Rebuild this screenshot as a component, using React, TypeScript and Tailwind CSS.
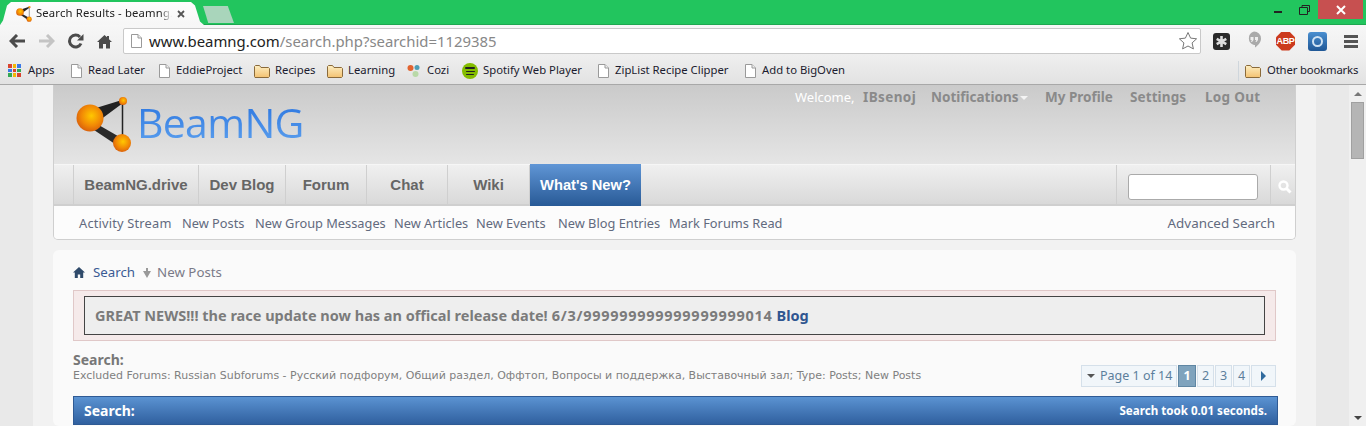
import React from "react";

const Page = ({ c = "" }: { c?: string }) => (
  <svg width="13" height="16" viewBox="0 0 13 16" className={c}>
    <path d="M1.500 1.500h6.500l3.500 3.500v9.500h-10z" fill="#fff" stroke="#9a9a9a" />
    <path d="M8 1.500v3.500h3.500" fill="#eee" stroke="#9a9a9a" />
  </svg>
);

const Folder = () => (
  <svg width="16" height="14" viewBox="0 0 16 14">
    <defs>
      <linearGradient id="fold" x1="0" y1="0" x2="0" y2="1">
        <stop offset="0" stopColor="#fdeec2" />
        <stop offset="1" stopColor="#f3c272" />
      </linearGradient>
    </defs>
    <path d="M.5 12.500v-10l1-1h4l1.500 2h7.500l1 1v8l-1 1h-13.500z" fill="url(#fold)" stroke="#8a6a3a" />
  </svg>
);

const Mark = ({ big = false }: { big?: boolean }) => {
  const id = big ? "b" : "s";
  return (
    <svg width={big ? 56 : 16} height={big ? 56 : 16} viewBox="0 0 56 56">
      <defs>
        <radialGradient id={`orb${id}`} cx="0.55" cy="0.42" r="0.6">
          <stop offset="0" stopColor="#ffc800" />
          <stop offset="0.6" stopColor="#f28a05" />
          <stop offset="1" stopColor="#d9600c" />
        </radialGradient>
      </defs>
      <path d="M20 11 46 3 47 6 24 23z" fill="#222" />
      <path d="M21 27 47 42 42 49 15 31z" fill="#2a2a2a" />
      <path d="M46.500 6v36" stroke="#222" strokeWidth="1.500" />
      <circle cx="14" cy="21" r="13.500" fill={`url(#orb${id})`} />
      <circle cx="47" cy="4" r="4" fill={`url(#orb${id})`} />
      <circle cx="46" cy="46" r="9" fill={`url(#orb${id})`} />
    </svg>
  );
};

const Chrome = () => (
  <>
    <div className="h-[25px] bg-[#22c55e] border-b border-[#1ea750] flex items-end relative shrink-0">
      <div className="relative w-[204px] h-[23px] -mb-px bg-gradient-to-b from-[#fdfdfd] to-[#f6f6f6] flex items-center pl-[16px] [clip-path:polygon(0_100%,3px_80%,7px_15%,11px_0,191px_0,195px_15%,200px_85%,100%_100%)]">
        <Mark />
        <span className="ml-[4px] w-[140px] whitespace-nowrap text-[11.3px] tracking-[0.15px] text-[#222] font-['Noto_Sans',sans-serif] [mask-image:linear-gradient(90deg,#000_124px,transparent_136px)]">
          Search Results - beamng.c
        </span>
        <svg width="8" height="8" viewBox="0 0 8 8" className="ml-[1px]">
          <path d="M1 1l6 6M7 1l-6 6" stroke="#555" strokeWidth="1.800" />
        </svg>
      </div>
      <div className="mb-[1px] -ml-px w-[31px] h-[17px] bg-[#a9d5bb] [clip-path:polygon(0_0,80%_0,100%_100%,17%_100%)]" />
      <div className="ml-auto flex items-start self-start h-[19px]">
        <div className="w-[24px] h-[19px] flex items-center justify-center">
          <div className="w-[8px] h-[2px] bg-[#222] mt-[5px]" />
        </div>
        <div className="w-[28px] h-[19px] flex items-center justify-center">
          <svg width="11" height="10" viewBox="0 0 11 10">
            <path d="M3 2.500V.5h7.500v6H8.500M.5 2.500h8v7h-8z" fill="none" stroke="#222" />
          </svg>
        </div>
        <div className="w-[45px] h-[19px] bg-[#c75050] flex items-center justify-center mr-[3px]">
          <svg width="10" height="10" viewBox="0 0 10 10">
            <path d="M1 1l8 8M9 1l-8 8" stroke="#fff" strokeWidth="2" />
          </svg>
        </div>
      </div>
    </div>
    <div className="h-[32px] bg-gradient-to-b from-[#f7f7f7] to-[#eeeeee] flex items-center shrink-0">
      <svg width="18" height="14" viewBox="0 0 18 14" className="ml-[9px]">
        <path d="M8 1 2 7l6 6M2 7h14" fill="none" stroke="#4b4b4b" strokeWidth="3" />
      </svg>
      <svg width="18" height="14" viewBox="0 0 18 14" className="ml-[10px]">
        <path d="M10 1l6 6-6 6M16 7H2" fill="none" stroke="#c4c4c4" strokeWidth="3" />
      </svg>
      <svg width="16" height="16" viewBox="0 0 16 16" className="ml-[13px]">
        <path d="M13 10.500A6 6 0 1 1 12 4" fill="none" stroke="#4b4b4b" strokeWidth="3" />
        <path d="M15.500 1v6.500H9z" fill="#4b4b4b" />
      </svg>
      <svg width="15" height="15" viewBox="0 0 15 15" className="ml-[13px]">
        <path d="M7.500 1 0 8h2v6.500h4V10h3v4.500h4V8h2l-3-2.800V2h-2v1.300z" fill="#4b4b4b" />
      </svg>
      <div className="ml-[11px] w-[1078px] h-[26px] bg-white border border-[#c9c9c9] rounded-[2px] flex items-center pl-[6px] pr-[2px]">
        <Page />
        <span className="ml-[6px] mt-[1px] text-[14.9px] text-[#222] font-['Noto_Sans',sans-serif] whitespace-nowrap">
          www.beamng.com<span className="text-[#888]">/search.php?searchid=1129385</span>
        </span>
        <svg width="20" height="20" viewBox="0 0 20 20" className="ml-auto">
          <path d="M10 1.500l2.600 5.600 6 .7-4.500 4.100 1.300 6L10 15l-5.400 2.900 1.300-6L1.400 7.800l6-.7z" fill="#fff" stroke="#777" />
        </svg>
      </div>
      <div className="ml-[12px] w-[17px] h-[17px] rounded-[3px] bg-[#2a2a2a] flex items-center justify-center">
        <svg width="11" height="11" viewBox="0 0 11 11">
          <path d="M5.500 0v11M.7 2.800l9.600 5.400M.7 8.200l9.600-5.400" stroke="#ddd" strokeWidth="2.600" />
        </svg>
      </div>
      <svg width="16" height="20" viewBox="0 0 16 20" className="ml-[16px]">
        <path d="M8 .5a7 7 0 0 1 7 7c0 4-3 7-6 9v-2.500a7 7 0 0 1-1 0 7 7 0 0 1 0-13.500z" fill="#aaa" />
        <path d="M4.500 6h3v3l-1.500 2h-1l.8-2H4.500zM9 6h3v3l-1.500 2h-1l.8-2H9z" fill="#eee" />
      </svg>
      <div className="ml-[14px] w-[19px] h-[19px] bg-[#cc3a1d] [clip-path:polygon(30%_0,70%_0,100%_30%,100%_70%,70%_100%,30%_100%,0_70%,0_30%)] flex items-center justify-center text-white text-[9px] tracking-[-0.4px] font-bold font-['Liberation_Sans',sans-serif] leading-none">
        ABP
      </div>
      <div className="ml-[13px] w-[19px] h-[19px] rounded-[3px] bg-gradient-to-b from-[#4a8fd0] to-[#1f5796] flex items-center justify-center">
        <div className="w-[11px] h-[11px] rounded-full border-2 border-[#cfe2f3]" />
      </div>
      <div className="ml-[17px] w-[14px] flex flex-col gap-[2px]">
        <div className="h-[3px] bg-[#555]" />
        <div className="h-[3px] bg-[#555]" />
        <div className="h-[3px] bg-[#555]" />
      </div>
    </div>
    <div className="h-[28px] bg-gradient-to-b from-[#eeeeee] to-[#e2e2e2] border-b border-[#a8a8a8] flex items-center pl-[8px] text-[11.3px] text-[#1b1b2e] font-['Noto_Sans',sans-serif] whitespace-nowrap shrink-0">
      <div className="grid grid-cols-3 gap-[1px] w-[13px] h-[13px]">
        {["#d9442f", "#f2b705", "#3b78e7", "#3b78e7", "#d9442f", "#34a853", "#34a853", "#f2b705", "#d9442f"].map((c, i) => (
          <div key={i} style={{ backgroundColor: c }} />
        ))}
      </div>
      <span className="ml-[7px] w-[27px]">Apps</span>
      <Page c="ml-[15px]" />
      <span className="ml-[5px] w-[55px]">Read Later</span>
      <Page c="ml-[15px]" />
      <span className="ml-[5px] w-[66px]">EddieProject</span>
      <div className="ml-[12px] flex"><Folder /></div>
      <span className="ml-[5px] w-[40px]">Recipes</span>
      <div className="ml-[12px] flex"><Folder /></div>
      <span className="ml-[5px] w-[46px]">Learning</span>
      <svg width="14" height="14" viewBox="0 0 14 14" className="ml-[13px]">
        <circle cx="3.500" cy="4" r="3" fill="#e2632f" />
        <circle cx="10" cy="3.500" r="2.500" fill="#4d9db5" />
        <circle cx="8.500" cy="10" r="3" fill="#b9d9a8" />
      </svg>
      <span className="ml-[6px] w-[23px]">Cozi</span>
      <div className="ml-[12px] w-[16px] h-[16px] rounded-full bg-[#84bd00] flex flex-col items-center justify-center gap-[2px]">
        <div className="w-[10px] h-[2px] bg-[#222] rounded-full" />
        <div className="w-[9px] h-[1px] bg-[#222] rounded-full" />
        <div className="w-[8px] h-[1px] bg-[#222] rounded-full" />
      </div>
      <span className="ml-[5px] w-[99px]">Spotify Web Player</span>
      <Page c="ml-[15px]" />
      <span className="ml-[5px] w-[114px]">ZipList Recipe Clipper</span>
      <Page c="ml-[15px]" />
      <span className="ml-[5px]">Add to BigOven</span>
      <div className="ml-auto w-px h-[20px] bg-[#cfd6dc]" />
      <div className="ml-[6px] flex"><Folder /></div>
      <span className="ml-[6px] mr-[8px] w-[91px] tracking-[-0.15px]">Other bookmarks</span>
    </div>
  </>
);

const tabs: [string, string][] = [
  ["BeamNG.drive", "w-[125px]"],
  ["Dev Blog", "w-[87px]"],
  ["Forum", "w-[81px]"],
  ["Chat", "w-[81px]"],
  ["Wiki", "w-[82px]"],
];
const subs: [string, string][] = [
  ["Activity Stream", "w-[93px] tracking-[0.2px]"],
  ["New Posts", "w-[63px]"],
  ["New Group Messages", "w-[129px]"],
  ["New Articles", "w-[72px]"],
  ["New Events", "w-[72px]"],
  ["New Blog Entries", "w-[101px]"],
  ["Mark Forums Read", "w-[114px]"],
];
const tahoma = "font-['DejaVu_Sans',sans-serif]";

const Header = () => (
  <div className="rounded-b-[5px] border border-t-0 border-[#cfcfcf] overflow-hidden">
    <div className="h-[79px] bg-gradient-to-b from-[#cacaca] to-[#e5e5e5] flex items-start relative">
      <div className="ml-[22px] mt-[12px] flex"><Mark big /></div>
      <span className="ml-[5px] mt-[12px] text-[41px] leading-[50px] bg-gradient-to-b from-[#2470de] to-[#5fa2ee] bg-clip-text text-transparent font-['Open_Sans',sans-serif] tracking-[-0.7px]">BeamNG</span>
      <div className="ml-auto mr-[34px] mt-[3px] flex items-center text-[13.5px] font-bold text-[#8a8a8a] font-['Noto_Sans',sans-serif] leading-[18px] whitespace-nowrap">
        <span className="w-[60px] text-white font-normal text-[13px]">Welcome,</span>
        <span className="ml-[8px] w-[55px] tracking-[0.4px]">IBsenoj</span>
        <span className="ml-[13px] w-[85px]">Notifications</span>
        <span className="ml-[4px] mt-[2px] border-x-[4px] border-x-transparent border-t-[4px] border-t-[#f4f4f4]" />
        <span className="ml-[17px] w-[67px]">My Profile</span>
        <span className="ml-[18px] w-[57px] tracking-[0.1px]">Settings</span>
        <span className="ml-[18px] w-[56px] tracking-[0.3px]">Log Out</span>
      </div>
    </div>
    <div className="h-[42px] bg-gradient-to-b from-[#f0f0f0] to-[#d9d9d9] border-t border-[#f6f6f6] border-b-2 border-b-[#cfcfcf] flex text-[15px] font-bold text-[#666] font-['Liberation_Sans',sans-serif]">
      <div className="w-[20px] border-r border-[#cfcfcf]" />
      {tabs.map(([t, w]) => (
        <div key={t} className={`${w} h-[39px] pt-[1px] border-r border-[#cfcfcf] flex items-center justify-center`}>{t}</div>
      ))}
      <div className="w-[111px] h-[42px] -mt-px bg-gradient-to-b from-[#6096d6] to-[#285a96] text-white text-[14.7px] flex items-center justify-center">What's New?</div>
      <div className="ml-auto w-[179px] border-l border-[#cfcfcf] h-[39px] flex items-center pl-[11px]">
        <div className="w-[130px] h-[26px] mt-[5px] bg-white border border-[#aaa] rounded-[3px]" />
        <div className="ml-[12px] w-px self-stretch bg-[#cfcfcf]" />
        <svg width="14" height="14" viewBox="0 0 14 14" className="ml-[7px] mt-[5px]">
          <circle cx="5.500" cy="5.500" r="4" fill="none" stroke="#fff" strokeWidth="2.400" />
          <path d="M8.500 8.500l4 4" stroke="#fff" strokeWidth="3" />
        </svg>
      </div>
    </div>
    <div className="h-[33px] pt-[2px] bg-[#fcfcfc] flex items-center pl-[25px] pr-[20px] text-[12.8px] text-[#626a7e] font-['Noto_Sans',sans-serif] gap-[10px] whitespace-nowrap">
      {subs.map(([s, w]) => <span key={s} className={w}>{s}</span>)}
      <span className="ml-auto text-[13.4px]">Advanced Search</span>
    </div>
  </div>
);

const Body = () => (
  <div className="mt-[10px] rounded-[6px] bg-[#fafafa] pt-[14px] px-[20px] flex-1">
    <div className="flex items-center h-[17px] text-[13.3px] font-['Noto_Sans',sans-serif]">
      <svg width="12" height="11" viewBox="0 0 12 11">
        <path d="M6 0 0 5.500h1.800V11h3V7.500h2.400V11h3V5.500H12z" fill="#2f4a6a" />
      </svg>
      <span className="ml-[8px] text-[#3b5b94]">Search</span>
      <svg width="8" height="10" viewBox="0 0 8 10" className="ml-[8px]">
        <path d="M3 0h2v3h3L4 10 0 3h3z" fill="#999" />
      </svg>
      <span className="ml-[6px] text-[#7a7a88]">New Posts</span>
    </div>
    <div className="mt-[9px] h-[51px] bg-[#f5eaea] border border-[#e0c8c8] px-[10px] py-[5px]">
      <div className="h-[39px] bg-[#eeeeee] border border-[#444] flex items-center pl-[10px] text-[14.5px] font-bold text-[#7b7b7b] font-['Noto_Sans',sans-serif] whitespace-nowrap">
        GREAT NEWS!!! the race update now has an offical release date! <span className="ml-[4px] tracking-[0.72px]">6/3/999999999999999999014</span>
        <span className="ml-[4px] text-[#2f5590]">Blog</span>
      </div>
    </div>
    <div className="mt-[11px] flex h-[35px]">
      <div className="flex-1">
        <div className="text-[14px] leading-[16px] font-bold text-[#777] font-['Noto_Sans',sans-serif]">Search:</div>
        <div className={`text-[10.97px] leading-[15px] text-[#808080] ${tahoma} whitespace-nowrap`}>
          Excluded Forums: Russian Subforums - Русский подфорум, Общий раздел, Оффтоп, Вопросы и поддержка, Выставочный зал; Type: Posts; New Posts
        </div>
      </div>
      <div className="self-end flex gap-[1px] text-[12.5px] text-[#5c7f9c] font-['Noto_Sans',sans-serif] whitespace-nowrap">
        <div className="w-[96px] h-[22px] bg-[#f1f6fa] border border-[#d5e0ea] flex items-center pl-[5px]">
          <span className="border-x-[4px] border-x-transparent border-t-[4px] border-t-[#555]" />
          <span className="ml-[5px]">Page 1 of 14</span>
        </div>
        <div className="w-[18px] h-[22px] bg-[#7fa3bd] border border-[#5f86a3] text-white font-bold flex items-center justify-center">1</div>
        {["2", "3", "4"].map((n) => (
          <div key={n} className="w-[17px] h-[22px] bg-[#f1f6fa] border border-[#d5e0ea] flex items-center justify-center">{n}</div>
        ))}
        <div className="w-[25px] h-[22px] bg-[#f1f6fa] border border-[#d5e0ea] flex items-center justify-center">
          <span className="border-y-[5px] border-y-transparent border-l-[5px] border-l-[#2f6a9e]" />
        </div>
      </div>
    </div>
    <div className="mt-[9px] -mr-[2px] h-[29px] bg-gradient-to-b from-[#5b93d2] to-[#30609f] border border-[#2f5a94] flex items-center pl-[10px] pr-[10px] text-white font-bold font-['Noto_Sans',sans-serif]">
      <span className="text-[14px]">Search:</span>
      <span className="ml-auto text-[11.6px]">Search took 0.01 seconds.</span>
    </div>
  </div>
);

export default function App() {
  return (
    <div className="h-[426px] w-[1366px] overflow-hidden flex flex-col bg-[#f2f2f2]">
      <Chrome />
      <div className="flex-1 flex min-h-0">
        <div className="flex-1 flex bg-[#e9e9e9] min-w-0">
          <div className="ml-[33px] w-[1283px] bg-[#f2f2f2] px-[20px] flex flex-col">
            <Header />
            <Body />
          </div>
        </div>
        <div className="w-[17px] bg-[#f0f0f0] flex flex-col items-center">
          <span className="mt-[7px] border-x-[4px] border-x-transparent border-b-[4px] border-b-[#777]" />
          <div className="mt-[6px] w-[13px] h-[57px] bg-[#b5b5b5] border border-[#a0a0a0]" />
          <span className="mt-auto mb-[6px] border-x-[4px] border-x-transparent border-t-[4px] border-t-[#444]" />
        </div>
      </div>
    </div>
  );
}
